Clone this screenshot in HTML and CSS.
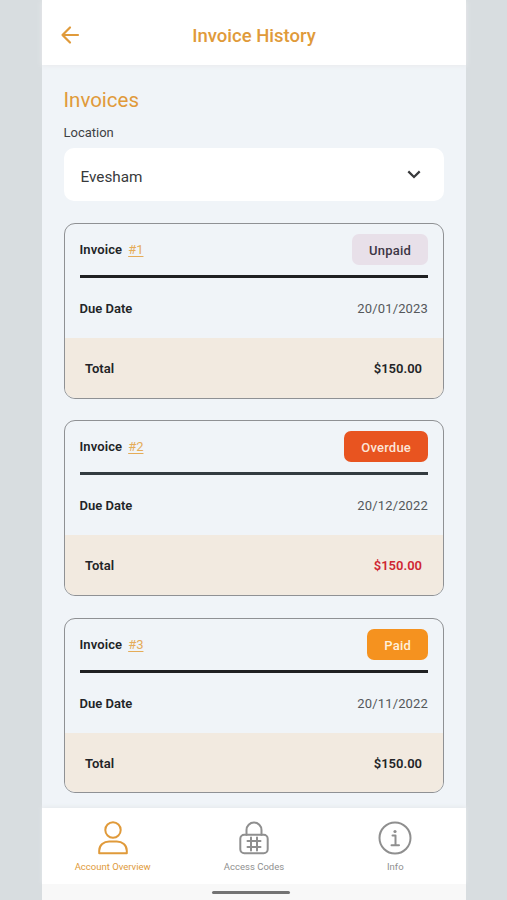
FILE: index.html
```html
<!DOCTYPE html>
<html lang="en">
<head>
<meta charset="utf-8">
<title>Invoice History</title>
<link rel="stylesheet" href="styles.css">
</head>
<body>
<div class="phone">
  <header class="topbar">
    <svg class="back" viewBox="0 0 20 20"><path d="M18 10H2.500M10 2.500L2.500 10l7.500 7.500"/></svg>
    <h1>Invoice History</h1>
  </header>
  <main class="content">
    <h2>Invoices</h2>
    <label class="label">Location</label>
    <div class="select"><span>Evesham</span>
      <svg class="chevron" viewBox="0 0 14 9"><path d="M1.300 1.400L7 7l5.700-5.600"/></svg>
    </div>
    <section class="card">
      <div class="head"><span class="name">Invoice</span><a class="num">#1</a><span class="badge unpaid">Unpaid</span></div>
      <div class="due"><b>Due Date</b><span>20/01/2023</span></div>
      <div class="total"><b>Total</b><b class="amount">$150.00</b></div>
    </section>
    <section class="card">
      <div class="head slate"><span class="name">Invoice</span><a class="num">#2</a><span class="badge overdue">Overdue</span></div>
      <div class="due"><b>Due Date</b><span>20/12/2022</span></div>
      <div class="total"><b>Total</b><b class="amount late">$150.00</b></div>
    </section>
    <section class="card">
      <div class="head"><span class="name">Invoice</span><a class="num">#3</a><span class="badge paid">Paid</span></div>
      <div class="due"><b>Due Date</b><span>20/11/2022</span></div>
      <div class="total"><b>Total</b><b class="amount">$150.00</b></div>
    </section>
  </main>
  <nav class="tabs">
    <a class="tab active">
      <svg viewBox="0 0 34 34"><circle cx="17" cy="9" r="7.700"/><path d="M3.200 32.200v-2.400c0-5.500 4.500-9.400 10-9.400h7.600c5.500 0 10 3.900 10 9.400v2.400z"/></svg>
      <span>Account Overview</span>
    </a>
    <a class="tab">
      <svg viewBox="0 0 34 34"><rect x="3.300" y="13.700" width="27.400" height="18.600" rx="4"/><path d="M9.500 13.700V9a7.500 7.500 0 0 1 15 0v4.700M14 16.500v13M20 16.500v13M10.500 20h13M10.500 26h13"/></svg>
      <span>Access Codes</span>
    </a>
    <a class="tab">
      <svg viewBox="0 0 34 34"><circle cx="17" cy="17" r="15.500"/><path d="M14.500 14.500h3v9.500M13.500 24.200h7.500"/><circle class="dot" cx="17" cy="10.500" r="1.600"/></svg>
      <span>Info</span>
    </a>
  </nav>
  <footer class="gesture"><i></i></footer>
</div>
</body>
</html>
```
FILE: styles.css
```css
* { box-sizing: border-box; }
body {
  margin: 0;
  height: 900px;
  background: #d8dde0;
  font-family: Roboto, "Liberation Sans", sans-serif;
  color: #222427;
  overflow: hidden;
}
.phone {
  width: 424px;
  height: 900px;
  margin-left: 42px;
  background: #f0f4f8;
  display: flex;
  flex-direction: column;
}
svg { fill: none; stroke: currentColor; stroke-linecap: round; stroke-linejoin: round; }
.topbar {
  height: 65px;
  flex: none;
  display: grid;
  grid-template-columns: 60px 1fr 60px;
  align-items: center;
  padding-top: 6px;
  background: #fff;
  box-shadow: 0 1px 5px #e9ebec;
  color: #e09a3a;
}
.back { width: 20px; height: 20px; margin: -2px 0 0 18px; stroke-width: 2.200; }
h1 { margin: 0; text-align: center; font-size: 18.500px; line-height: 24px; font-weight: 500; }
.content { flex: 1; min-height: 0; padding: 23px 22px 0 21.500px; }
h2 { margin: 0; font-size: 20.500px; line-height: 24px; font-weight: 400; color: #e09a3a; }
.label { display: block; margin-top: 12px; font-size: 13px; line-height: 18px; color: #3f4245; }
.select {
  height: 53px;
  margin: 6px 0 22px;
  padding: 4px 23px 0 17px;
  border-radius: 10px;
  background: #fff;
  display: flex;
  align-items: center;
  justify-content: space-between;
  font-size: 15.300px;
  color: #38393b;
}
.chevron { width: 14px; height: 9px; margin-top: -4px; stroke-width: 2.200; stroke-linecap: butt; stroke-linejoin: miter; }
.card {
  height: 175.500px;
  margin-bottom: 21.900px;
  border: 1px solid #8f9194;
  border-radius: 11px;
  overflow: hidden;
  display: flex;
  flex-direction: column;
  font-size: 13px;
}
.card b, .name { font-weight: 600; }
.name { letter-spacing: .1px; }
.head {
  height: 54px;
  margin: 0 15px;
  border-bottom: 3px solid #1f2022;
  display: flex;
  align-items: center;
}
.slate { border-color: #333b40; }
.num { margin-left: 6px; color: #e5ac58; text-decoration: underline; text-underline-offset: 2px; }
.badge {
  height: 31px;
  margin-left: auto;
  padding: 1px 17px 0;
  border-radius: 7px;
  line-height: 31px;
  font-weight: 500;
  letter-spacing: .2px;
}
.unpaid { background: #e8e0e9; color: #3d3545; }
.overdue { background: #e85420; color: #fce5d8; }
.paid { background: #f5921f; color: #fff0dc; }
.due, .total { display: flex; align-items: center; justify-content: space-between; }
.due { height: 60px; padding: 1px 15px 0; }
.due span { color: #55585b; letter-spacing: .15px; }
.total { flex: 1; padding: 1px 21px 0 20.500px; background: #f2eae0; }
.card .late { color: #cf2633; }
.tabs {
  height: 76px;
  flex: none;
  display: grid;
  grid-template-columns: repeat(3, 1fr);
  background: #fff;
  box-shadow: 0 -1px 4px #e5e8eb;
  color: #8f8f8f;
}
.tab { display: flex; flex-direction: column; align-items: center; padding-top: 13px; font-size: 9.500px; line-height: 12px; }
.tab svg { width: 34px; height: 34px; margin-bottom: 6px; stroke-width: 2; }
.tab .dot { fill: currentColor; stroke: none; }
.active { color: #e09a3a; }
.gesture { height: 16px; flex: none; background: #f8f8f8; display: flex; justify-content: center; padding: 7px 6px 0 0; }
.gesture i { width: 78px; height: 2.500px; border-radius: 2px; background: #737373; }
```
